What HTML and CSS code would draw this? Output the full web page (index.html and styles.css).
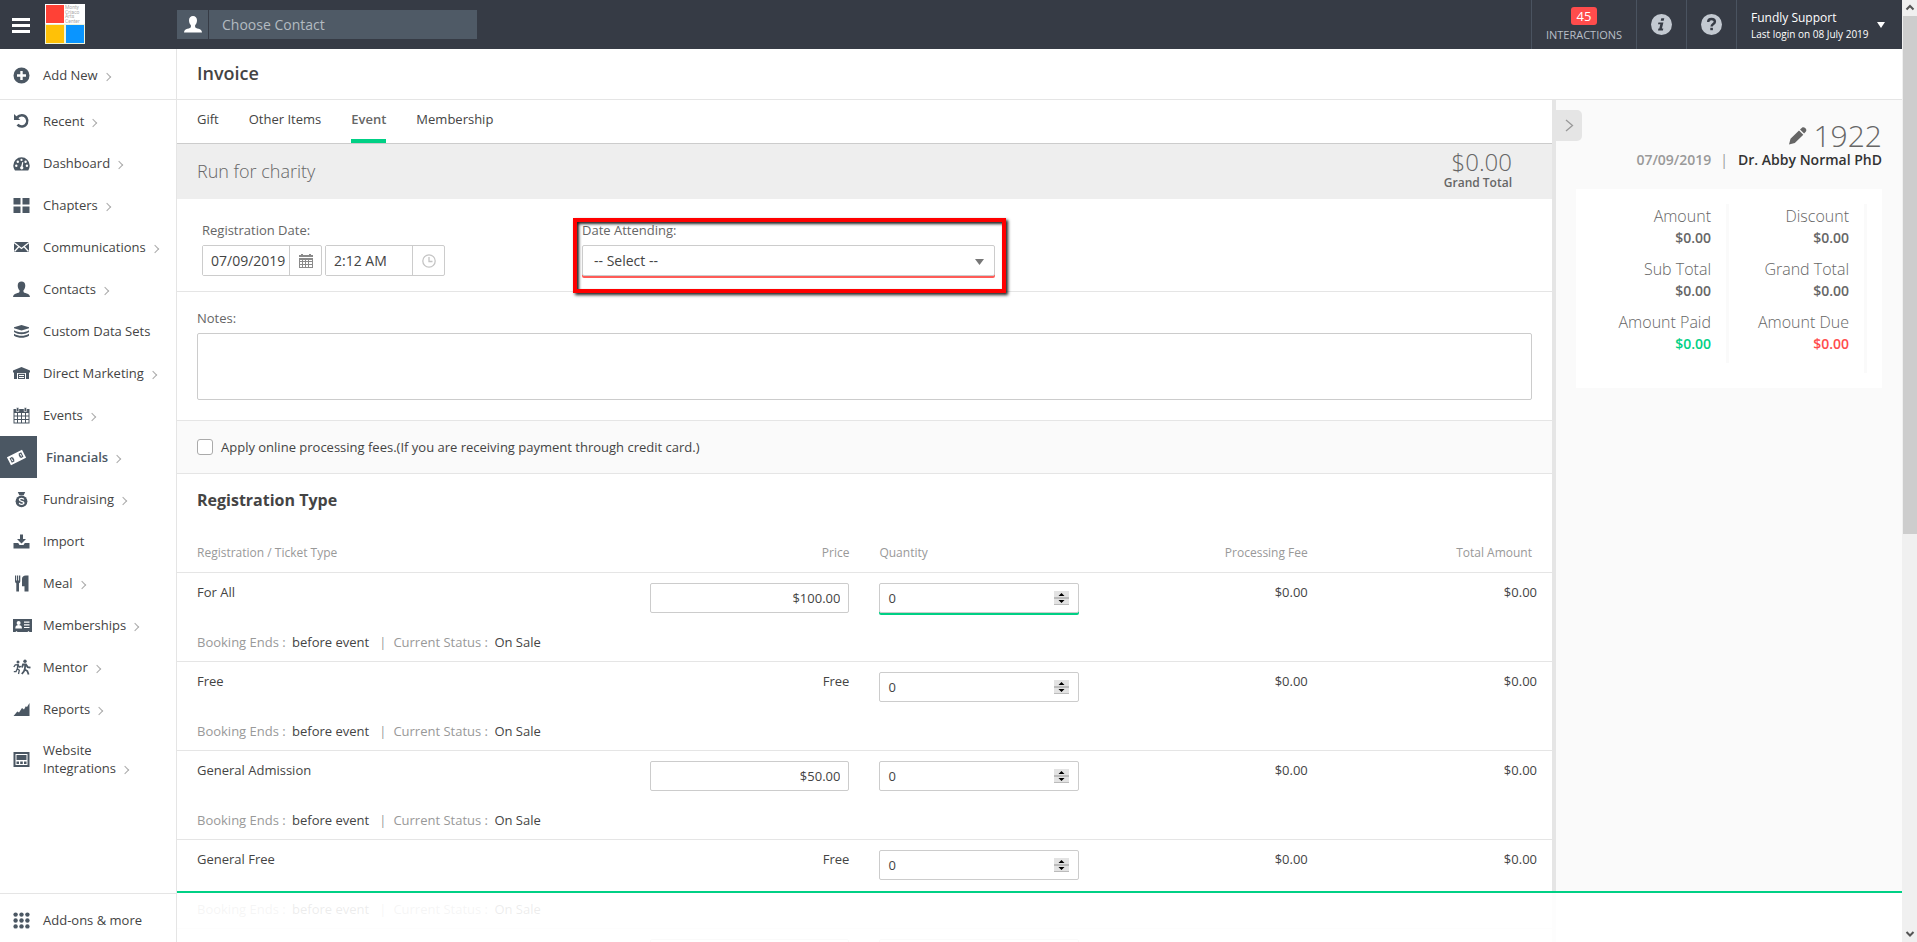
FILE: index.html
```
<!DOCTYPE html>
<html lang="en">
<head>
	<meta charset="UTF-8">
	<title>Invoice</title>
	<link rel="stylesheet" href="styles.css">
</head>
<body>
	<div id="page">
		<header id="top">
			<button type="button" class="menu-btn" aria-label="Menu"><span></span><span></span><span></span></button>
			<a href="#" class="logo" aria-label="Home">
				<svg width="40" height="40" viewBox="0 0 40 40">
					<rect width="40" height="40" fill="#fff"/>
					<rect x="0" y="20" width="40" height="20" fill="#eef3d8"/>
					<rect x="1" y="1" width="18" height="18" fill="#ff4136"/>
					<rect x="1" y="21" width="18" height="18" fill="#ffc107"/>
					<rect x="21" y="21" width="18" height="18" fill="#0a95ff"/>
					<g font-family="Roboto, sans-serif" font-size="5" fill="#aaa">
						<text x="20" y="5">Monty</text>
						<text x="20" y="10">Criaco</text>
						<text x="20" y="14">Arts</text>
						<text x="20" y="19">Center</text>
					</g>
				</svg>
			</a>
			<form class="contact">
				<button type="button" aria-label="Contacts">
					<svg width="18" height="17" viewBox="0 0 18 17"><path fill="#fff" d="M9 0c2.400 0 4 1.700 4 4.200 0 2.300-.8 4-1.900 5v1.500c0 1 1.500 1.500 3.500 2.100 2 .6 3.200 1.500 3.400 3.700H0c.2-2.200 1.400-3.100 3.400-3.700 2-.6 3.500-1.100 3.500-2.100V9.200C5.800 8.200 5 6.500 5 4.200 5 1.700 6.600 0 9 0z"/></svg>
				</button>
				<input type="text" placeholder="Choose Contact" aria-label="Choose Contact">
			</form>
			<a href="#" class="inter"><b>45</b><span>INTERACTIONS</span></a>
			<a href="#" class="round" aria-label="Information">
				<svg width="21" height="21" viewBox="0 0 21 21"><circle cx="10.500" cy="10.500" r="10.500" fill="#c3c9d1"/><path fill="#363b45" d="M10.300 4.200h3l-.6 2.600h-3zM7.400 8.400h5l-1.500 6.200h1.400l-.4 1.800H7l.4-1.800h.9l1-4.400H7z"/></svg>
			</a>
			<a href="#" class="round" aria-label="Help">
				<svg width="21" height="21" viewBox="0 0 21 21"><circle cx="10.500" cy="10.500" r="10.500" fill="#c3c9d1"/><path fill="none" stroke="#363b45" stroke-width="2.400" d="M7.200 8c0-2 1.400-3 3.300-3s3.400 1 3.400 2.700c0 2.300-3.300 2.300-3.300 4.800"/><rect x="9.300" y="13.800" width="2.600" height="2.400" fill="#363b45"/></svg>
			</a>
			<button type="button" class="user">
				<span class="who">Fundly Support<small>Last login on 08 July 2019</small></span>
				<svg width="8" height="6" viewBox="0 0 8 6"><path fill="#fff" d="M0 0h8L4 6z"/></svg>
			</button>
		</header>

		<nav id="side">
			<ul class="add">
				<li><a href="#"><svg class="ico" viewBox="0 0 17 17"><path fill-rule="evenodd" d="M8.500.5a8 8 0 1 1 0 16 8 8 0 0 1 0-16zM7.300 4v3.300H4v2.400h3.300V13h2.400V9.700H13V7.300H9.700V4z"/></svg><span>Add New<i></i></span></a></li>
			</ul>
			<ul class="list">
				<li><a href="#"><svg class="ico" viewBox="0 0 17 17"><path fill="none" stroke="#4b5763" stroke-width="2.600" d="M4 4.500C5.200 3.200 7 2.300 8.800 2.300a5.600 5.600 0 1 1-4.300 9.300"/><path d="M1 1v6h6.300z"/></svg><span>Recent<i></i></span></a></li>
				<li><a href="#"><svg class="ico" viewBox="0 0 17 17"><path d="M2 15.500C.9 14 .3 12.300.3 10.500a8.200 8.200 0 0 1 16.400 0c0 1.800-.5 3.500-1.500 5z"/><g fill="#fff"><circle cx="3.300" cy="10.800" r="1.200"/><circle cx="4.800" cy="6.700" r="1.200"/><circle cx="8.500" cy="4.900" r="1.100"/><circle cx="12.600" cy="6.700" r="1.200"/><circle cx="13.900" cy="10.800" r="1.200"/><path d="M9.300 7l1 .2-.6 4.300c.7.500.9 1.300.5 2-.5 1-1.800 1.200-2.500.6-1-.8-.7-2.400.5-2.800z"/></g></svg><span>Dashboard<i></i></span></a></li>
				<li><a href="#"><svg class="ico" viewBox="0 0 17 17"><path d="M.5 1h7v6.500h-7zM9.500 1h7v6.500h-7zM.5 9.500h7V16h-7zM9.500 9.500h7V16h-7z"/></svg><span>Chapters<i></i></span></a></li>
				<li><a href="#"><svg class="ico" viewBox="0 0 17 17"><path d="M1 3h15v10H1z"/><path fill="none" stroke="#fff" stroke-width="1.300" d="M1 3.500l7.500 6 7.500-6M1.500 12.500l4.500-5M15.500 12.500l-4.500-5"/></svg><span>Communications<i></i></span></a></li>
				<li><a href="#"><svg class="ico" viewBox="0 0 18 17"><path d="M9 0c2.400 0 4 1.700 4 4.200 0 2.300-.8 4-1.900 5v1.500c0 1 1.500 1.500 3.500 2.100 2 .6 3.200 1.500 3.400 3.700H0c.2-2.200 1.400-3.100 3.400-3.700 2-.6 3.500-1.100 3.500-2.100V9.200C5.800 8.200 5 6.500 5 4.200 5 1.700 6.600 0 9 0z"/></svg><span>Contacts<i></i></span></a></li>
				<li><a href="#"><svg class="ico" viewBox="0 0 17 17"><path d="M8.500 2l7.500 2.300v1L8.500 7.600 1 5.300v-1z"/><path d="M1 7.200c2.500 1.600 5 2 7.500 2s5-.4 7.500-2v1.900c-2.500 1.600-5 2.100-7.500 2.100S3.500 10.700 1 9.100zM1 10.800c2.500 1.500 5 2 7.500 2s5-.5 7.500-2v2c-2.500 1.500-5 2-7.500 2s-5-.5-7.500-2z"/></svg><span>Custom Data Sets</span></a></li>
				<li><a href="#"><svg class="ico" viewBox="0 0 17 17"><path fill-rule="evenodd" d="M8.500 2L17 5.600v1.900h-1V14h-3V8H4v6H1V7.500H0V5.600z"/><path fill-rule="evenodd" d="M5 8.800h7V14H5zM6 10v1h5v-1zM6 12v1h5v-1z"/></svg><span>Direct Marketing<i></i></span></a></li>
				<li><a href="#"><svg class="ico" viewBox="0 0 17 17"><path d="M.5 2h16v14.500H.5z"/><path fill="#fff" d="M1.500 6H4v2.500H1.500zM5 6h3v2.500H5zM9 6h3v2.500H9zM13 6h2.500v2.500H13zM1.500 9.500H4V12H1.500zM5 9.500h3V12H5zM9 9.500h3V12H9zM13 9.500h2.500V12H13zM1.500 13H4v2.500H1.500zM5 13h3v2.500H5zM9 13h3v2.500H9zM13 13h2.500v2.500H13z"/><path stroke="#fff" stroke-width=".6" d="M3.400.5h2.400v4H3.400zM11.200.5h2.400v4h-2.400z"/></svg><span>Events<i></i></span></a></li>
				<li class="on"><a href="#"><b class="box"><svg width="19" height="17" viewBox="0 0 19 17"><g transform="rotate(-27 9.500 8.500)"><path fill="#fff" d="M1 4h17v9H1z"/><path fill="#4b5763" d="M3 6h3v1.200H4v2.600h2V11H3zM16 6h-3v1.200h2v2.600h-2V11h3z"/><circle cx="9.500" cy="8.500" r="3.300" fill="#fff"/><path fill="#4b5763" d="M5 7h1.500v3H5zM12.500 7H14v3h-1.500z"/></g></svg></b><span>Financials<i></i></span></a></li>
				<li><a href="#"><svg class="ico" viewBox="0 0 17 17"><path d="M4.800 1h7.400l-1.500 3.200H6.300z"/><circle cx="8.500" cy="10.300" r="5.900"/><path fill="none" stroke="#fff" stroke-width="1.300" d="M10.800 8.700c-.2-.9-1-1.300-2.200-1.300-1.300 0-2.200.5-2.200 1.400 0 2.100 4.500.9 4.500 3 0 1-1 1.500-2.300 1.500s-2.200-.5-2.400-1.500"/></svg><span>Fundraising<i></i></span></a></li>
				<li><a href="#"><svg class="ico" viewBox="0 0 17 17"><path d="M7 1.500h3V6h3L8.500 10.500 4 6h3z"/><path d="M.5 10h4.700l1.300 2h4l1.300-2h4.700v5.500H.5z"/></svg><span>Import</span></a></li>
				<li><a href="#"><svg class="ico" viewBox="0 0 17 17"><path d="M2 .5h1.200v5h.8v-5h1.200v5H6v-5h1.300V6c0 1.200-.6 1.900-1.300 2.300v8.200H3.300V8.300C2.600 7.900 2 7.200 2 6zM11.500 16.500v-5.300H9V4c0-2 1.500-3.500 3.800-3.500h2.700v16z"/></svg><span>Meal<i></i></span></a></li>
				<li><a href="#"><svg class="ico wide" viewBox="0 0 19 17"><path d="M0 2h19v13h-2.500l-1-1-1 1h-10l-1-1-1 1H0z"/><g fill="#fff"><circle cx="5.600" cy="6" r="2"/><path d="M2.300 11.500c0-2.600 1.300-3.500 3.300-3.500s3.400.9 3.400 3.500zM11 4.500h5.500v1.200H11zM11 7.200h5.500v1.200H11zM11 9.900h5.500v1.200H11z"/></g></svg><span>Memberships<i></i></span></a></li>
				<li><a href="#"><svg class="ico wide" viewBox="0 0 19 17"><circle cx="5" cy="3" r="1.500"/><circle cx="12" cy="2.200" r="1.700"/><path fill="none" stroke="#4b5763" stroke-width="1.300" d="M.8 8l1.500-2.200 2.900-.2 1 2.600 2-.8M4.800 6L4.300 9.800l2 1.500-.8 3.700M4.300 9.800l-1.300 2.800H.8"/><path fill="none" stroke="#4b5763" stroke-width="1.800" d="M9 8.500l1-3 2.900-.1 1.800 2.700 2.800.6M12.300 5.500l-.5 5 2.500 1.500 1.300 3.500M11.800 10l-1 2.500-2 2.500"/></svg><span>Mentor<i></i></span></a></li>
				<li><a href="#"><svg class="ico" viewBox="0 0 17 17"><path d="M.5 15l3.800-4.500 1.700 1 3-4.500 2 1.500 1.800-3.300 1.200.7L16.500 2v13z"/></svg><span>Reports<i></i></span></a></li>
				<li class="two"><a href="#"><svg class="ico" viewBox="0 0 17 17"><path fill-rule="evenodd" d="M.5 1h16v15H.5zM2.500 3v11h12V3z"/><path d="M3.500 4h10v5h-10zM3.500 10.500H6V13H3.500zM7.200 10.500h2.600V13H7.200zM11 10.500h2.500V13H11z"/></svg><span>Website Integrations<i></i></span></a></li>
			</ul>
			<ul class="more">
				<li><a href="#"><svg class="ico" viewBox="0 0 17 17"><g><circle cx="2.600" cy="2.600" r="2.200"/><circle cx="8.500" cy="2.600" r="2.200"/><circle cx="14.400" cy="2.600" r="2.200"/><circle cx="2.600" cy="8.500" r="2.200"/><circle cx="8.500" cy="8.500" r="2.200"/><circle cx="14.400" cy="8.500" r="2.200"/><circle cx="2.600" cy="14.400" r="2.200"/><circle cx="8.500" cy="14.400" r="2.200"/><circle cx="14.400" cy="14.400" r="2.200"/></g></svg><span>Add-ons &amp; more</span></a></li>
			</ul>
		</nav>

		<main id="content">
			<h1>Invoice</h1>
			<div class="cols">
				<div class="invoice">
					<div class="tabs">
						<a href="#">Gift</a>
						<a href="#">Other Items</a>
						<a href="#" class="on">Event</a>
						<a href="#">Membership</a>
					</div>
					<div class="event">
						<h2>Run for charity</h2>
						<p>$0.00<small>Grand Total</small></p>
					</div>
					<div class="dates">
						<div class="field">
							<label for="regdate">Registration Date:</label>
							<div class="pair">
								<div class="group">
									<input type="text" id="regdate" value="07/09/2019">
									<button type="button" aria-label="Pick a date"><svg width="14" height="14" viewBox="0 0 14 14"><path fill="#8a8a8a" d="M2 0h2v1h6V0h2v1h2v2H0V1h2zM0 4h14v10H0z"/><path fill="#fff" d="M1 6h2v1H1zM4 6h2v1H4zM7 6h2v1H7zM10 6h3v1h-3zM1 8h2v2H1zM4 8h2v2H4zM7 8h2v2H7zM10 8h3v2h-3zM1 11h2v2H1zM4 11h2v2H4zM7 11h2v2H7zM10 11h3v2h-3z"/></svg></button>
								</div>
								<div class="group">
									<input type="text" value="2:12 AM" aria-label="Registration time">
									<button type="button" aria-label="Pick a time"><svg width="14" height="14" viewBox="0 0 14 14"><g fill="none" stroke="#c4c4c4" stroke-width="1.300"><circle cx="7" cy="7" r="6.200"/><path d="M7 3v4.500h3.500"/></g></svg></button>
								</div>
							</div>
						</div>
						<div class="field attend">
							<label for="attend">Date Attending:</label>
							<div class="drop">
								<select id="attend"><option>-- Select --</option></select>
								<svg width="9" height="6" viewBox="0 0 9 6"><path fill="#777" d="M0 0h9L4.500 6z"/></svg>
							</div>
						</div>
					</div>
					<div class="notes">
						<label for="notes">Notes:</label>
						<textarea id="notes"></textarea>
					</div>
					<div class="fees">
						<input type="checkbox" id="fees">
						<label for="fees">Apply online processing fees.(If you are receiving payment through credit card.)</label>
					</div>
					<h3>Registration Type</h3>
					<table>
						<thead>
							<tr><th class="name">Registration / Ticket Type</th><th class="num">Price</th><th>Quantity</th><th class="num">Processing Fee</th><th class="num last">Total Amount</th></tr>
						</thead>
						<tbody>
							<tr>
								<td class="name">For All</td>
								<td class="num"><input type="text" class="price" value="$100.00" aria-label="Price"></td>
								<td><div class="qty green"><input type="number" value="0" aria-label="Quantity"><svg width="15" height="14" viewBox="0 0 15 14"><path fill="#e3e3e3" d="M0 0h15v14H0z"/><path fill="#bbb" d="M0 6h15v2H0zM0 13h15v1H0z"/><path d="M4.500 5L7.500 2l3 3zM4.500 9h6l-3 3z"/></svg></div></td>
								<td class="num">$0.00</td>
								<td class="num">$0.00</td>
							</tr>
							<tr class="info"><td colspan="5">Booking Ends : <b>before event</b><i>|</i>Current Status : <b>On Sale</b></td></tr>
						</tbody>
						<tbody>
							<tr>
								<td class="name">Free</td>
								<td class="num">Free</td>
								<td><div class="qty"><input type="number" value="0" aria-label="Quantity"><svg width="15" height="14" viewBox="0 0 15 14"><path fill="#e3e3e3" d="M0 0h15v14H0z"/><path fill="#bbb" d="M0 6h15v2H0zM0 13h15v1H0z"/><path d="M4.500 5L7.500 2l3 3zM4.500 9h6l-3 3z"/></svg></div></td>
								<td class="num">$0.00</td>
								<td class="num">$0.00</td>
							</tr>
							<tr class="info"><td colspan="5">Booking Ends : <b>before event</b><i>|</i>Current Status : <b>On Sale</b></td></tr>
						</tbody>
						<tbody>
							<tr>
								<td class="name">General Admission</td>
								<td class="num"><input type="text" class="price" value="$50.00" aria-label="Price"></td>
								<td><div class="qty"><input type="number" value="0" aria-label="Quantity"><svg width="15" height="14" viewBox="0 0 15 14"><path fill="#e3e3e3" d="M0 0h15v14H0z"/><path fill="#bbb" d="M0 6h15v2H0zM0 13h15v1H0z"/><path d="M4.500 5L7.500 2l3 3zM4.500 9h6l-3 3z"/></svg></div></td>
								<td class="num">$0.00</td>
								<td class="num">$0.00</td>
							</tr>
							<tr class="info"><td colspan="5">Booking Ends : <b>before event</b><i>|</i>Current Status : <b>On Sale</b></td></tr>
						</tbody>
						<tbody>
							<tr>
								<td class="name">General Free</td>
								<td class="num">Free</td>
								<td><div class="qty"><input type="number" value="0" aria-label="Quantity"><svg width="15" height="14" viewBox="0 0 15 14"><path fill="#e3e3e3" d="M0 0h15v14H0z"/><path fill="#bbb" d="M0 6h15v2H0zM0 13h15v1H0z"/><path d="M4.500 5L7.500 2l3 3zM4.500 9h6l-3 3z"/></svg></div></td>
								<td class="num">$0.00</td>
								<td class="num">$0.00</td>
							</tr>
							<tr class="info"><td colspan="5">Booking Ends : <b>before event</b><i>|</i>Current Status : <b>On Sale</b></td></tr>
						</tbody>
						<tbody>
							<tr>
								<td class="name"></td>
								<td class="num"><input type="text" class="price" aria-label="Price"></td>
								<td><div class="qty"><input type="number" aria-label="Quantity"></div></td>
								<td></td>
								<td></td>
							</tr>
						</tbody>
					</table>
				</div>
				<aside class="summary">
					<button type="button" class="toggle" aria-label="Collapse"><svg width="9" height="13" viewBox="0 0 9 13"><path fill="none" stroke="#999" stroke-width="1.300" d="M1 1l6.500 5.500L1 12"/></svg></button>
					<div class="number">
						<svg width="18" height="18" viewBox="0 0 18 18"><path fill="#666" d="M0 17.500l1.500-5.700L10 3.500l4.300 4.300-8.500 8.300zM11 2.600L13 .8c.8-.7 2.300-.6 3.400.5s1.200 2.500.5 3.300l-1.800 2z"/></svg>
						<strong>1922</strong>
					</div>
					<p class="who">07/09/2019<i>|</i><b>Dr. Abby Normal PhD</b></p>
					<div class="card">
						<dl>
							<dt>Amount</dt><dd>$0.00</dd>
							<dt>Sub Total</dt><dd>$0.00</dd>
							<dt>Amount Paid</dt><dd class="paid">$0.00</dd>
						</dl>
						<dl class="tall">
							<dt>Discount</dt><dd>$0.00</dd>
							<dt>Grand Total</dt><dd>$0.00</dd>
							<dt>Amount Due</dt><dd class="due">$0.00</dd>
						</dl>
					</div>
				</aside>
			</div>
			<div class="bottom"></div>
		</main>

		<div id="scroll">
			<svg width="15" height="16" viewBox="0 0 15 16"><path fill="none" stroke="#555" stroke-width="2" d="M4.500 9.500l3.500-3.500 3.500 3.500"/></svg>
			<span></span>
			<svg width="15" height="16" viewBox="0 0 15 16"><path fill="none" stroke="#555" stroke-width="2" d="M4.500 6l3.500 3.500L11.500 6"/></svg>
		</div>
	</div>
</body>
</html>
```
FILE: styles.css
```
* {
	box-sizing: border-box;
}
html,body {
	margin: 0;
	padding: 0;
	background: #fff;
}
body, input, select, textarea, button {
	font-family: "Open Sans", "Noto Sans", sans-serif;
	font-size: 13px;
	line-height: 18px;
	color: #444;
}
h1, h2, h3, p, ul, dl, dd {
	margin: 0;
	padding: 0;
}
li { list-style: none; }
a {
	color: inherit;
	text-decoration: none;
}
i { font-style: normal; }
svg { display: block; }
button {
	padding: 0;
	border: 0;
	background: none;
}

#page {
	display: grid;
	grid-template: 49px 1fr / 177px 1fr 15px;
	height: 100vh;
	overflow: hidden;
}

/* top bar */
#top {
	grid-column: 1 / 3;
	display: flex;
	align-items: center;
	background: #363b45;
	color: #fff;
}
.menu-btn {
	display: flex;
	flex-direction: column;
	gap: 3px;
	width: 18px;
	margin: 2px 15px 0 12px;
}
.menu-btn span {
	height: 3px;
	background: #fff;
}
.logo {
	height: 41px;
	margin-right: 92px;
}
.contact {
	display: flex;
	gap: 1px;
	width: 300px;
	height: 29px;
	margin-right: auto;
}
.contact button {
	display: flex;
	align-items: center;
	justify-content: center;
	width: 31px;
	background: #4f5a66;
}
.contact input {
	flex: 1;
	min-width: 0;
	padding: 0 13px;
	border: 0;
	font-size: 14px;
	color: #fff;
	background: #4f5a66;
}
.contact input::placeholder {
	color: #b3bac1;
	opacity: 1;
}
.inter, .round, .user {
	display: flex;
	align-items: center;
	justify-content: center;
	height: 49px;
	border-left: 1px solid #4a5360;
	color: #fff;
}
.inter {
	flex-direction: column;
	gap: 1px;
	width: 105px;
	padding-top: 1px;
	font-size: 11px;
	color: #b9bfc7;
}
.inter b {
	width: 26px;
	border-radius: 3px;
	text-align: center;
	font-size: 13px;
	font-weight: 400;
	color: #fff;
	background: #ff4c4c;
}
.round { width: 50px; }
.user {
	justify-content: flex-start;
	gap: 8px;
	width: 166px;
	padding-left: 14px;
	text-align: left;
}
.user .who {
	padding-top: 2px;
	font-size: 12px;
	line-height: 16px;
	white-space: nowrap;
}
.user small {
	display: block;
	font-size: 10px;
}

/* side menu */
#side {
	display: flex;
	flex-direction: column;
	min-height: 0;
	border-right: 1px solid #e5e5e5;
}
#side a {
	display: flex;
	align-items: center;
	height: 42px;
}
#side .add {
	height: 51px;
	padding-top: 5px;
	border-bottom: 1px solid #e5e5e5;
}
#side .list {
	flex: 1;
	min-height: 0;
	overflow: hidden;
}
#side .more {
	height: 49px;
	padding-top: 5px;
	border-top: 1px solid #e5e5e5;
}
#side .two a { height: 58px; }
#side .two span { width: 90px; }
.ico {
	flex: none;
	width: 17px;
	height: 17px;
	margin: 0 13px 0 13px;
	fill: #4b5763;
}
.wide {
	width: 19px;
	margin: 0 11px 0 13px;
}
#side span i {
	display: inline-block;
	width: 6px;
	height: 6px;
	margin-left: 6px;
	border: solid #aaa;
	border-width: 1px 1px 0 0;
	transform: rotate(45deg);
}
#side .on {
	font-weight: 600;
	color: #4b5763;
}
.box {
	display: flex;
	align-items: center;
	width: 37px;
	height: 42px;
	margin-right: 9px;
	padding-left: 7px;
	background: #4b5763;
}

/* content */
#content {
	position: relative;
	display: flex;
	flex-direction: column;
	min-width: 0;
	min-height: 0;
}
h1 {
	height: 51px;
	padding-left: 20px;
	border-bottom: 1px solid #e5e5e5;
	font-size: 18px;
	font-weight: 600;
	line-height: 48px;
}
.cols {
	display: flex;
	flex: 1;
	min-height: 0;
	overflow: hidden;
}
.invoice {
	flex: 1;
	min-width: 0;
}
.tabs {
	display: flex;
	gap: 30px;
	height: 44px;
	padding-left: 20px;
	border-bottom: 1px solid #ccc;
	line-height: 38px;
}
.tabs .on {
	border-bottom: 4px solid #00d085;
	font-weight: 600;
	color: #666;
}
.event {
	display: flex;
	align-items: center;
	justify-content: space-between;
	height: 55px;
	padding: 0 40px 2px 20px;
	background: #eee;
	color: #666;
}
.event h2 {
	font-size: 18px;
	font-weight: 300;
}
.event p {
	text-align: right;
	font-size: 24px;
	font-weight: 300;
	line-height: 24px;
}
.event small {
	display: block;
	font-size: 12px;
	font-weight: 600;
	line-height: 18px;
}
.dates {
	display: flex;
	height: 93px;
	padding: 22px 25px 0;
	border-bottom: 1px solid #e5e5e5;
}
.field { width: 380px; }
.field label, .notes label {
	display: block;
	margin-bottom: 6px;
	color: #666;
}
.pair {
	display: flex;
	gap: 3px;
}
.group {
	display: flex;
	width: 120px;
	height: 31px;
	border: 1px solid #ccc;
	border-radius: 2px;
}
.group input {
	width: 87px;
	padding: 0 0 0 8px;
	border: 0;
	border-right: 1px solid #ccc;
	font-size: 14px;
}
.group button {
	display: flex;
	flex: 1;
	align-items: center;
	justify-content: center;
}
/* highlighted field */
.attend {
	position: relative;
	width: 413px;
}
.attend:after {
	content: '';
	position: absolute;
	top: -3px;
	left: -9px;
	right: -11px;
	height: 67px;
	border: 4px solid #f00;
	box-shadow: 2px 2px 3px #222, inset 2px 2px 3px #222;
	pointer-events: none;
}
.drop { position: relative; }
.drop select {
	display: block;
	width: 100%;
	height: 31px;
	padding: 0 11px;
	border: 1px solid #ccc;
	border-radius: 2px;
	font-size: 14px;
	background: #fff;
	box-shadow: 0 2px 0 #ff5b57;
	appearance: none;
}
.drop svg {
	position: absolute;
	top: 14px;
	right: 11px;
}
.notes {
	height: 129px;
	padding: 17px 20px 0;
	border-bottom: 1px solid #e5e5e5;
}
.notes textarea {
	display: block;
	width: 100%;
	height: 67px;
	border: 1px solid #ccc;
	border-radius: 2px;
	resize: none;
}
.fees {
	display: flex;
	align-items: center;
	gap: 8px;
	height: 53px;
	padding-left: 20px;
	border-bottom: 1px solid #e5e5e5;
	background: #fafafa;
}
.fees input {
	width: 16px;
	height: 16px;
	margin: 0;
	border: 1px solid #aaa;
	border-radius: 3px;
	background: #fff;
	appearance: none;
}
h3 {
	padding: 16px 20px 0;
	font-size: 16px;
	font-weight: 700;
	line-height: 20px;
}
table {
	width: 100%;
	table-layout: fixed;
	border-collapse: collapse;
}
th {
	width: 16.67%;
	height: 62px;
	padding: 25px 15px 0;
	text-align: left;
	font-size: 12px;
	font-weight: 400;
	color: #999;
}
th.name { width: 33.33%; }
th.last { padding-right: 20px; }
tbody { border-top: 1px solid #e5e5e5; }
td {
	height: 58px;
	padding: 10px 15px 0;
	vertical-align: top;
}
.name, .info td { padding-left: 20px; }
.num { text-align: right; }
.info td {
	height: 31px;
	padding-top: 3px;
	color: #999;
}
.info b {
	margin-left: 3px;
	font-weight: 400;
	color: #444;
}
.info i { margin: 0 7px 0 10px; }
td input {
	display: block;
	width: 100%;
	height: 30px;
	padding: 0 8px;
	border: 1px solid #ccc;
	border-radius: 2px;
	background: #fff;
}
.price { text-align: right; }
.qty { position: relative; }
.qty input { appearance: textfield; }
.qty input::-webkit-inner-spin-button { appearance: none; }
.qty svg {
	position: absolute;
	top: 8px;
	right: 10px;
}
.green input { box-shadow: 0 2px 0 #00d085; }

/* summary */
.summary {
	position: relative;
	width: 350px;
	padding: 21px 20px 0;
	border-left: 4px solid #e5e5e5;
	background: #fafafa;
}
.toggle {
	position: absolute;
	top: 10px;
	left: 0;
	display: flex;
	align-items: center;
	justify-content: center;
	width: 26px;
	height: 31px;
	border-radius: 0 5px 5px 0;
	background: #e5e5e5;
}
.number {
	display: flex;
	align-items: center;
	justify-content: flex-end;
	gap: 7px;
	color: #666;
}
.number strong {
	font-size: 30px;
	font-weight: 300;
	line-height: 30px;
}
.summary .who {
	text-align: right;
	font-size: 14px;
	font-weight: 600;
	color: #999;
}
.summary .who i {
	margin: 0 10px 0 9px;
	font-weight: 400;
}
.summary .who b {
	font-weight: 600;
	color: #333;
}
.card {
	display: flex;
	align-items: flex-start;
	height: 199px;
	margin-top: 20px;
	padding: 15px;
	background: #fff;
}
.card dl {
	flex: 1;
	height: 159px;
	padding-right: 15px;
	border-right: 3px solid #fafafa;
	text-align: right;
	color: #666;
}
.card .tall { height: 169px; }
.card dt {
	font-size: 16px;
	font-weight: 300;
	line-height: 25px;
}
.card dd {
	margin-bottom: 10px;
	font-size: 14px;
	font-weight: 600;
}
.card .paid { color: #00d085; }
.card .due { color: #ff4c4c; }

/* fades what scrolls under it */
.bottom {
	position: absolute;
	left: 0;
	right: 0;
	bottom: 0;
	height: 51px;
	border-top: 2px solid #00d085;
	background: rgba(255,255,255,.9);
}

#scroll {
	grid-column: 3;
	grid-row: 1 / 3;
	display: flex;
	flex-direction: column;
	background: #f0f0f0;
}
#scroll span {
	height: 55%;
	margin-bottom: auto;
	margin-left: 1px;
	background: #cdcdcd;
}
```
